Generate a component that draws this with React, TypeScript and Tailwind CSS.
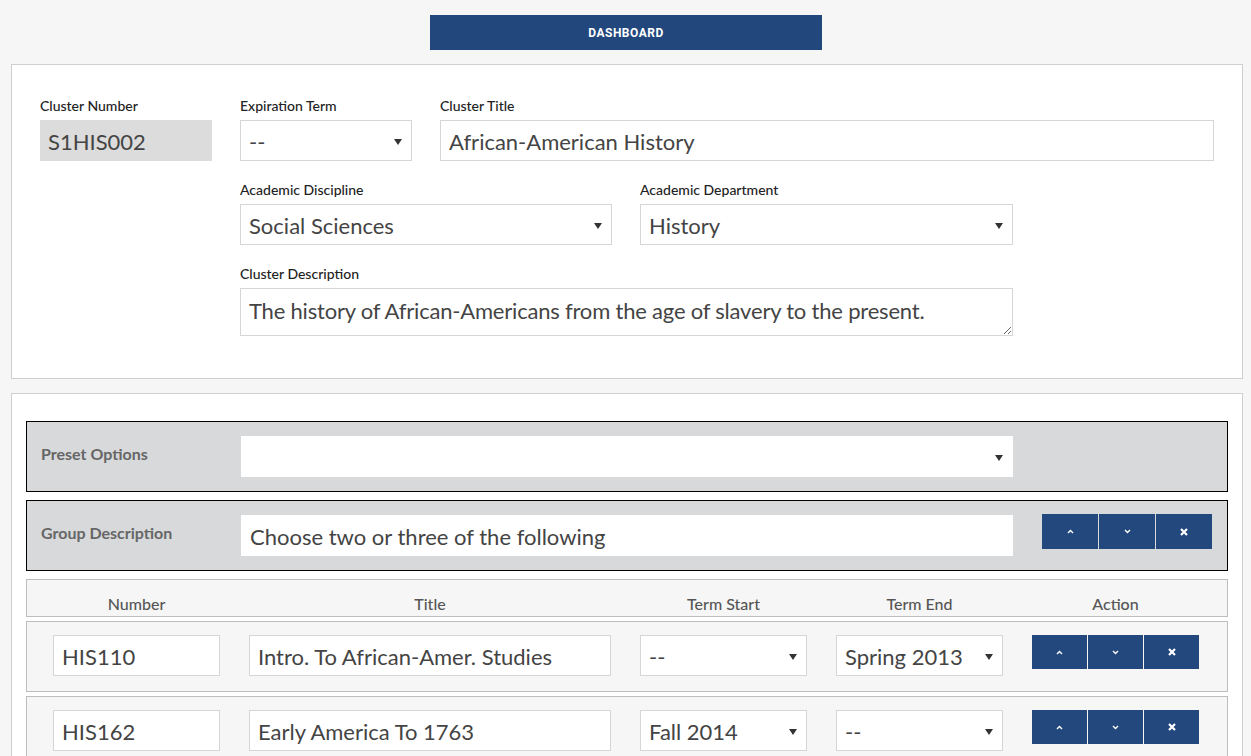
import React from "react";

const FONT = { fontFamily: "Lato, 'Open Sans', sans-serif" };

function Caret() {
  return (
    <svg width="8" height="6" viewBox="0 0 8 6" className="shrink-0">
      <path d="M0 0 L8 0 L4 6 Z" fill="#333" />
    </svg>
  );
}

function Select({ value, className }: { value?: string; className: string }) {
  return (
    <div
      className={`flex items-center justify-between bg-white border border-[#d6d6d6] pl-2 pr-[9px] pt-[2px] h-[41px] text-[22px] text-[#444] ${className}`}
    >
      <span>{value}</span>
      <Caret />
    </div>
  );
}

function Input({ value, className }: { value: string; className: string }) {
  return (
    <div
      className={`flex items-center bg-white border border-[#d6d6d6] px-2 pt-[2px] h-[41px] text-[22px] text-[#444] whitespace-nowrap ${className}`}
    >
      {value}
    </div>
  );
}

function Field({
  label,
  children,
  className,
}: {
  label: string;
  children: React.ReactNode;
  className: string;
}) {
  return (
    <div className={`flex flex-col ${className}`}>
      <label className="text-[14px] font-medium text-[#222] leading-[18px] mb-[5px]">
        {label}
      </label>
      {children}
    </div>
  );
}

function ActionButtons({ w, h }: { w: string; h: string }) {
  return (
    <div className="flex gap-px shrink-0">
      {["up", "down", "x"].map((k) => (
        <button
          key={k}
          className={`flex items-center justify-center bg-[#22487e] ${w} ${h}`}
        >
          {k === "up" && (
            <svg width="7" height="5" viewBox="0 0 7 5">
              <path d="M1 4 L3.5 1.5 L6 4" stroke="#fff" strokeWidth="1.4" fill="none" />
            </svg>
          )}
          {k === "down" && (
            <svg width="7" height="5" viewBox="0 0 7 5">
              <path d="M1 1 L3.5 3.5 L6 1" stroke="#fff" strokeWidth="1.4" fill="none" />
            </svg>
          )}
          {k === "x" && (
            <svg width="8" height="8" viewBox="0 0 8 8">
              <path d="M1 1 L7 7 M7 1 L1 7" stroke="#fff" strokeWidth="2.2" />
            </svg>
          )}
        </button>
      ))}
    </div>
  );
}

const COURSES = [
  { num: "HIS110", title: "Intro. To African-Amer. Studies", start: "--", end: "Spring 2013" },
  { num: "HIS162", title: "Early America To 1763", start: "Fall 2014", end: "--" },
];

export default function App() {
  return (
    <div className="min-h-[756px] bg-[#f6f6f6] pt-[15px] pb-[20px]" style={FONT}>
      {/* Dashboard button */}
      <div className="flex justify-center pl-px">
        <button className="w-[392px] h-[35px] bg-[#21477d] text-white text-[12px] font-bold tracking-[0.5px] font-['Roboto',sans-serif]">
          DASHBOARD
        </button>
      </div>

      {/* Cluster info panel */}
      <div className="ml-[11px] mr-[8px] mt-[14px] bg-white border border-[#cfcfcf] pl-[28px] pt-[32px] pb-[42px]">
        <div className="flex gap-[28px]">
          <Field label="Cluster Number" className="w-[172px]">
            <div className="flex items-center bg-[#dcdcdc] px-2 pt-[2px] h-[41px] text-[22px] text-[#444]">
              S1HIS002
            </div>
          </Field>
          <div className="flex flex-col gap-[20px]">
            <div className="flex gap-[28px]">
              <Field label="Expiration Term" className="w-[172px]">
                <Select value="--" className="w-full" />
              </Field>
              <Field label="Cluster Title" className="w-[774px]">
                <Input value="African-American History" className="w-full" />
              </Field>
            </div>
            <div className="flex gap-[28px]">
              <Field label="Academic Discipline" className="w-[372px]">
                <Select value="Social Sciences" className="w-full" />
              </Field>
              <Field label="Academic Department" className="w-[373px]">
                <Select value="History" className="w-full" />
              </Field>
            </div>
            <Field label="Cluster Description" className="w-[773px]">
              <textarea
                readOnly
                className="h-[48px] border border-[#d6d6d6] px-2 pt-[9px] text-[22px] tracking-[-0.2px] leading-[26px] text-[#444] outline-none resize"
                value="The history of African-Americans from the age of slavery to the present."
              />
            </Field>
          </div>
        </div>
      </div>

      {/* Course group panel */}
      <div className="ml-[11px] mr-[8px] mt-[14px] bg-white border border-[#cfcfcf] px-[14px] pt-[27px] flex flex-col">
        <div className="flex items-center bg-[#d8d9db] border border-black h-[71px] pl-[14px]">
          <span className="w-[200px] text-[16px] font-bold text-[#666] pb-[6px]">Preset Options</span>
          <Select className="w-[772px] border-transparent" />
        </div>

        <div className="flex items-center bg-[#d8d9db] border border-black h-[71px] pl-[14px] mt-[8px]">
          <span className="w-[200px] text-[16px] font-bold text-[#666] pb-[6px]">Group Description</span>
          <Input value="Choose two or three of the following" className="w-[772px] border-transparent" />
          <div className="ml-[29px] self-start mt-[13px]">
            <ActionButtons w="w-[56px]" h="h-[35px]" />
          </div>
        </div>

        <div className="flex items-start border border-[#bdbdbd] bg-[#f6f6f6] h-[38px] mt-[8px] pl-[26px] pt-[14px] gap-[29px] text-[16px] leading-[20px] font-medium text-[#555]">
          <span className="w-[167px] text-center">Number</span>
          <span className="w-[362px] text-center">Title</span>
          <span className="w-[167px] text-center">Term Start</span>
          <span className="w-[167px] text-center">Term End</span>
          <span className="w-[167px] text-center">Action</span>
        </div>

        {COURSES.map((c) => (
          <div
            key={c.num}
            className="flex items-start border border-[#bdbdbd] bg-[#f6f6f6] h-[71px] mt-[4px] pl-[26px] pt-[13px] gap-[29px]"
          >
            <Input value={c.num} className="w-[167px]" />
            <Input value={c.title} className="w-[362px]" />
            <Select value={c.start} className="w-[167px]" />
            <Select value={c.end} className="w-[167px]" />
            <ActionButtons w="w-[55px]" h="h-[34px]" />
          </div>
        ))}
      </div>
    </div>
  );
}
